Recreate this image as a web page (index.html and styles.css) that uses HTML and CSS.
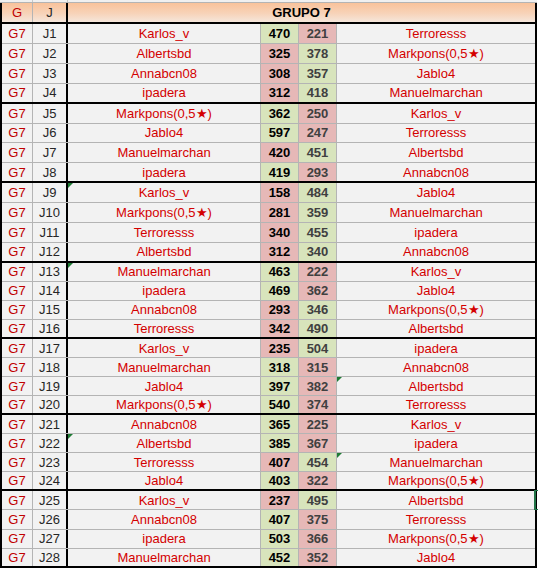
FILE: index.html
```html
<!DOCTYPE html>
<html lang="es">
<head>
<meta charset="utf-8">
<title>Grupo 7</title>
<link rel="stylesheet" href="styles.css">
</head>
<body>
<div class="sheet">
  <div class="strip"><span class="sg"></span><span class="sj"></span><span class="sr"></span></div>
  <div class="frame">
    <div class="row head">
      <div class="c g">G</div>
      <div class="c j">J</div>
      <div class="c title">GRUPO 7</div>
    </div>
    <div class="body">
      <div class="row"><div class="c g">G7</div><div class="c j">J1</div><div class="c p">Karlos_v</div><div class="c s1 win">470</div><div class="c s2 lose">221</div><div class="c p2">Terroresss</div></div>
      <div class="row"><div class="c g">G7</div><div class="c j">J2</div><div class="c p">Albertsbd</div><div class="c s1 lose">325</div><div class="c s2 win">378</div><div class="c p2">Markpons(0,5★)</div></div>
      <div class="row"><div class="c g">G7</div><div class="c j">J3</div><div class="c p">Annabcn08</div><div class="c s1 lose">308</div><div class="c s2 win">357</div><div class="c p2">Jablo4</div></div>
      <div class="row end"><div class="c g">G7</div><div class="c j">J4</div><div class="c p">ipadera</div><div class="c s1 lose">312</div><div class="c s2 win">418</div><div class="c p2">Manuelmarchan</div></div>
      <div class="row"><div class="c g">G7</div><div class="c j">J5</div><div class="c p">Markpons(0,5★)</div><div class="c s1 win">362</div><div class="c s2 lose">250</div><div class="c p2">Karlos_v</div></div>
      <div class="row"><div class="c g">G7</div><div class="c j">J6</div><div class="c p">Jablo4</div><div class="c s1 win">597</div><div class="c s2 lose">247</div><div class="c p2">Terroresss</div></div>
      <div class="row"><div class="c g">G7</div><div class="c j">J7</div><div class="c p">Manuelmarchan</div><div class="c s1 lose">420</div><div class="c s2 win">451</div><div class="c p2">Albertsbd</div></div>
      <div class="row end"><div class="c g">G7</div><div class="c j">J8</div><div class="c p">ipadera</div><div class="c s1 win">419</div><div class="c s2 lose">293</div><div class="c p2">Annabcn08</div></div>
      <div class="row"><div class="c g">G7</div><div class="c j">J9</div><div class="c p flag">Karlos_v</div><div class="c s1 lose">158</div><div class="c s2 win">484</div><div class="c p2">Jablo4</div></div>
      <div class="row"><div class="c g">G7</div><div class="c j">J10</div><div class="c p">Markpons(0,5★)</div><div class="c s1 lose">281</div><div class="c s2 win">359</div><div class="c p2">Manuelmarchan</div></div>
      <div class="row"><div class="c g">G7</div><div class="c j">J11</div><div class="c p">Terroresss</div><div class="c s1 lose">340</div><div class="c s2 win">455</div><div class="c p2">ipadera</div></div>
      <div class="row end"><div class="c g">G7</div><div class="c j">J12</div><div class="c p">Albertsbd</div><div class="c s1 lose">312</div><div class="c s2 win">340</div><div class="c p2">Annabcn08</div></div>
      <div class="row"><div class="c g">G7</div><div class="c j">J13</div><div class="c p flag">Manuelmarchan</div><div class="c s1 win">463</div><div class="c s2 lose">222</div><div class="c p2">Karlos_v</div></div>
      <div class="row"><div class="c g">G7</div><div class="c j">J14</div><div class="c p">ipadera</div><div class="c s1 win">469</div><div class="c s2 lose">362</div><div class="c p2">Jablo4</div></div>
      <div class="row"><div class="c g">G7</div><div class="c j">J15</div><div class="c p">Annabcn08</div><div class="c s1 lose">293</div><div class="c s2 win">346</div><div class="c p2">Markpons(0,5★)</div></div>
      <div class="row end"><div class="c g">G7</div><div class="c j">J16</div><div class="c p">Terroresss</div><div class="c s1 lose">342</div><div class="c s2 win">490</div><div class="c p2">Albertsbd</div></div>
      <div class="row"><div class="c g">G7</div><div class="c j">J17</div><div class="c p">Karlos_v</div><div class="c s1 lose">235</div><div class="c s2 win">504</div><div class="c p2">ipadera</div></div>
      <div class="row"><div class="c g">G7</div><div class="c j">J18</div><div class="c p">Manuelmarchan</div><div class="c s1 win">318</div><div class="c s2 lose">315</div><div class="c p2">Annabcn08</div></div>
      <div class="row"><div class="c g">G7</div><div class="c j">J19</div><div class="c p">Jablo4</div><div class="c s1 win">397</div><div class="c s2 lose">382</div><div class="c p2 flag">Albertsbd</div></div>
      <div class="row end"><div class="c g">G7</div><div class="c j">J20</div><div class="c p">Markpons(0,5★)</div><div class="c s1 win">540</div><div class="c s2 lose">374</div><div class="c p2">Terroresss</div></div>
      <div class="row"><div class="c g">G7</div><div class="c j">J21</div><div class="c p">Annabcn08</div><div class="c s1 win">365</div><div class="c s2 lose">225</div><div class="c p2">Karlos_v</div></div>
      <div class="row"><div class="c g">G7</div><div class="c j">J22</div><div class="c p flag">Albertsbd</div><div class="c s1 win">385</div><div class="c s2 lose">367</div><div class="c p2">ipadera</div></div>
      <div class="row"><div class="c g">G7</div><div class="c j">J23</div><div class="c p">Terroresss</div><div class="c s1 lose">407</div><div class="c s2 win">454</div><div class="c p2 flag">Manuelmarchan</div></div>
      <div class="row end"><div class="c g">G7</div><div class="c j">J24</div><div class="c p">Jablo4</div><div class="c s1 win">403</div><div class="c s2 lose">322</div><div class="c p2">Markpons(0,5★)</div></div>
      <div class="row"><div class="c g">G7</div><div class="c j">J25</div><div class="c p">Karlos_v</div><div class="c s1 lose">237</div><div class="c s2 win">495</div><div class="c p2 sel">Albertsbd</div></div>
      <div class="row"><div class="c g">G7</div><div class="c j">J26</div><div class="c p">Annabcn08</div><div class="c s1 win">407</div><div class="c s2 lose">375</div><div class="c p2">Terroresss</div></div>
      <div class="row"><div class="c g">G7</div><div class="c j">J27</div><div class="c p">ipadera</div><div class="c s1 win">503</div><div class="c s2 lose">366</div><div class="c p2">Markpons(0,5★)</div></div>
      <div class="row last"><div class="c g">G7</div><div class="c j">J28</div><div class="c p">Manuelmarchan</div><div class="c s1 win">452</div><div class="c s2 lose">352</div><div class="c p2">Jablo4</div></div>
    </div>
  </div>
</div>
</body>
</html>
```

FILE: styles.css
```css
html, body {
  margin: 0;
  padding: 0;
  background: #ffffff;
}

.sheet {
  width: 537px;
  font-family: "Liberation Sans", Arial, sans-serif;
  font-size: 13px;
}

.strip {
  height: 2px;
  background: #f0f0f0;
  border-bottom: 1px solid #b4b4b4;
  display: grid;
  grid-template-columns: 33px 35px 1fr;
}

.strip span {
  border-right: 1px solid #c8c8c8;
}

.strip .sr {
  border-right: none;
}

.frame {
  border-left: 2px solid #000;
  border-right: 2px solid #000;
}

.row {
  display: grid;
  grid-template-columns: 31px 35px 193px 38px 38px 198px;
  box-sizing: border-box;
  border-bottom: 1px solid #b4b4b4;
  position: relative;
}

.c {
  box-sizing: border-box;
  display: flex;
  align-items: center;
  justify-content: center;
  border-right: 1px solid #b4b4b4;
  white-space: nowrap;
  background: #f2f2f2;
  position: relative;
}

.row .j {
  border-right: 2px solid #000;
  color: #262626;
}

.row .g {
  color: #c00000;
}

.head {
  height: 21px;
  border-bottom: 2px solid #000;
}

.head .c {
  background: linear-gradient(to bottom, #f9c29a 0%, #f7d3b9 55%, #f5e6db 100%);
}

.head .title {
  grid-column: 3 / 7;
  border-right: none;
  font-weight: bold;
  color: #000;
}

.body {
  display: flex;
  flex-direction: column;
}

.body .row {
  flex: none;
  height: 19.06px;
}

.body .row:nth-child(-n+12) {
  height: 19.92px;
}

.body .row.end,
.body .row.last {
  border-bottom: 2px solid #000;
}

.p,
.p2 {
  color: #d40000;
}

.p2 {
  border-right: none;
}

.s1,
.s2 {
  font-weight: bold;
}

.s1 {
  color: #000;
}

.s2 {
  color: #404040;
}

.win {
  background: #d8e4bc;
}

.lose {
  background: #e6b8b7;
}

.flag::before {
  content: "";
  position: absolute;
  left: 0;
  top: 0;
  border-top: 5px solid #1e7b34;
  border-right: 5px solid transparent;
}

.sel::after {
  content: "";
  position: absolute;
  right: -3px;
  top: -1px;
  bottom: -1px;
  width: 2px;
  border-top: 1px solid #217346;
  border-bottom: 1px solid #217346;
  border-left: 2px solid #217346;
}
```
